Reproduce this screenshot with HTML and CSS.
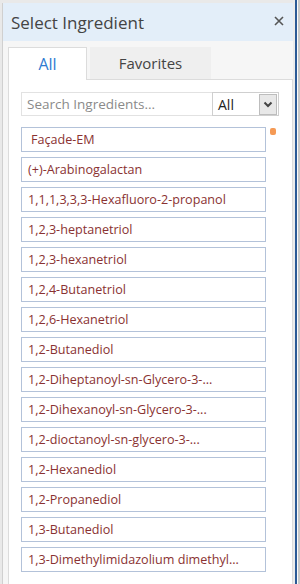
FILE: index.html
```html
<!DOCTYPE html>
<html lang="en">
<head>
    <meta charset="UTF-8">
    <meta name="viewport" content="width=device-width, initial-scale=1.0">
    <title>Select Ingredient</title>
    <link rel="stylesheet" href="styles.css">
</head>
<body>

    <div class="frame">
        <div class="window">
            <div class="header">
                <h2>Select Ingredient</h2>
                <span class="close">
                    <svg width="10" height="10" viewBox="0 0 10 10"><path d="M1 1 L9 9 M9 1 L1 9" stroke="#555" stroke-width="1.6"/></svg>
                </span>
            </div>
            <div class="content">
                <div class="tabs">
                    <div class="tab active">All</div>
                    <div class="tab">Favorites</div>
                </div>
                <div class="panel">
                    <div class="search-row">
                        <input type="text" class="search" placeholder="Search Ingredients...">
                        <div class="select">
                            <span>All</span>
                            <span class="arrow">
                                <svg width="10" height="7" viewBox="0 0 10 7"><path d="M1.5 1.5 L5 5 L8.5 1.5" fill="none" stroke="#444" stroke-width="2"/></svg>
                            </span>
                        </div>
                    </div>
                    <div class="list-wrap">
                        <ul class="list">
                            <li class="first">Façade-EM</li>
                            <li>(+)-Arabinogalactan</li>
                            <li>1,1,1,3,3,3-Hexafluoro-2-propanol</li>
                            <li>1,2,3-heptanetriol</li>
                            <li>1,2,3-hexanetriol</li>
                            <li>1,2,4-Butanetriol</li>
                            <li>1,2,6-Hexanetriol</li>
                            <li>1,2-Butanediol</li>
                            <li>1,2-Diheptanoyl-sn-Glycero-3-...</li>
                            <li>1,2-Dihexanoyl-sn-Glycero-3-...</li>
                            <li>1,2-dioctanoyl-sn-glycero-3-...</li>
                            <li>1,2-Hexanediol</li>
                            <li>1,2-Propanediol</li>
                            <li>1,3-Butanediol</li>
                            <li>1,3-Dimethylimidazolium dimethyl...</li>
                        </ul>
                        <span class="dot"></span>
                    </div>
                </div>
            </div>
        </div>
        <div class="edge"></div>
    </div>

</body>
</html>
```

FILE: styles.css
```css
html, body {
    height: 100%;
}

body {
    margin: 0;
    background: #e9e9e9;
    font-family: "Open Sans", "Noto Sans", Arial, sans-serif;
    overflow: hidden;
}

.frame {
    display: flex;
    height: 100%;
    padding: 3px 0 0 2px;
    box-sizing: border-box;
}

.window {
    width: 291px;
    display: flex;
    flex-direction: column;
    border-left: 1px solid #d0d0d0;
    box-sizing: border-box;
}

.edge {
    width: 7px;
    margin-top: -3px;
    background: linear-gradient(to right, #ececec 0, #ececec 2px, #2b5a96 2px, #2b5a96 4px, #fafafa 4px, #fafafa 5px, #c9c9c9 5px);
}

.header {
    height: 38px;
    background: #e3eef9;
    display: flex;
    align-items: center;
    justify-content: space-between;
    padding: 0 8px 0 8px;
}

.header h2 {
    margin: 0;
    font-weight: normal;
    font-size: 17px;
    color: #444;
}

.close {
    display: flex;
    margin-top: -3px;
    margin-right: 1px;
}

.content {
    flex: 1;
    background: #f6f6f6;
    padding: 6px 0 0 5px;
    display: flex;
    flex-direction: column;
}

.tabs {
    display: flex;
    gap: 3px;
    height: 32px;
}

.tab {
    width: 121px;
    background: #efefef;
    color: #444;
    font-size: 15px;
    text-align: center;
    line-height: 32px;
    box-sizing: border-box;
}

.tab.active {
    width: 79px;
    background: #fff;
    color: #2f7bd1;
    font-size: 16px;
    border: 1px solid #dcdcdc;
    border-bottom: none;
    height: 33px;
    position: relative;
    z-index: 1;
}

.panel {
    flex: 1;
    background: #fff;
    border: 1px solid #dcdcdc;
    border-bottom: none;
    padding: 12px 0 0 12px;
}

.search-row {
    display: flex;
    height: 24px;
    width: 258px;
}

.search {
    width: 191px;
    height: 24px;
    box-sizing: border-box;
    border: 1px solid #e2e2e2;
    border-right: none;
    padding: 0 5px;
    font-family: inherit;
    font-size: 13.5px;
    outline: none;
}

.search::placeholder {
    color: #8a8a8a;
}

.select {
    flex: 1;
    border: 1px solid #cfcfcf;
    display: flex;
    align-items: center;
    justify-content: space-between;
    padding: 1px 1px 1px 5px;
    font-size: 14px;
    color: #222;
    box-sizing: border-box;
}

.arrow {
    width: 16px;
    height: 19px;
    background: #e8e8e8;
    border: 1px solid #bdbdbd;
    display: flex;
    align-items: center;
    justify-content: center;
}

.list-wrap {
    position: relative;
    margin-top: 11px;
}

.list {
    list-style: none;
    margin: 0;
    padding: 0;
    display: flex;
    flex-direction: column;
    gap: 5px;
}

.list li {
    width: 245px;
    height: 25px;
    box-sizing: border-box;
    border: 1px solid #b3c2d9;
    padding-left: 6px;
    font-size: 12.6px;
    line-height: 23px;
    color: #8a3232;
    white-space: nowrap;
    overflow: hidden;
}

.list li.first {
    padding-left: 9px;
}

.dot {
    position: absolute;
    left: 249px;
    top: 1px;
    width: 6px;
    height: 7px;
    border-radius: 2px;
    background: #f59a55;
}
```
